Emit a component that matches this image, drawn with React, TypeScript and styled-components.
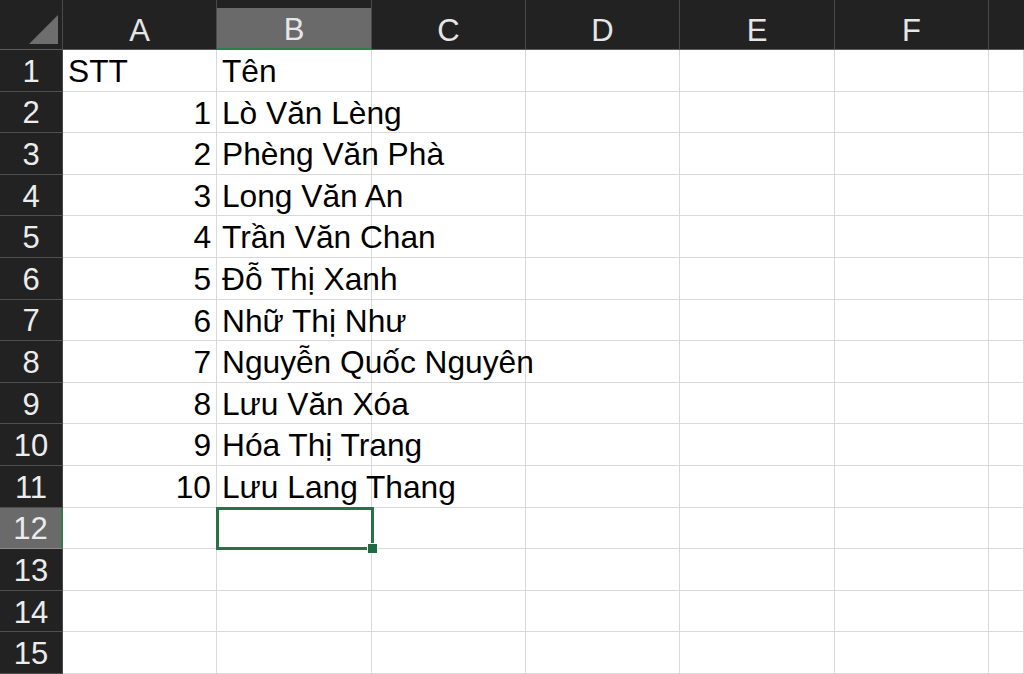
import React from "react";
import styled, { createGlobalStyle } from "styled-components";

const GlobalStyle = createGlobalStyle`
  html, body {
    margin: 0;
    padding: 0;
    background: #ffffff;
    overflow: hidden;
  }
  body {
    font-family: "Liberation Sans", Arial, sans-serif;
  }
`

const columns = ['A', 'B', 'C', 'D', 'E', 'F', '']
const names = [
  'Lò Văn Lèng',
  'Phèng Văn Phà',
  'Long Văn An',
  'Trần Văn Chan',
  'Đỗ Thị Xanh',
  'Nhữ Thị Như',
  'Nguyễn Quốc Nguyên',
  'Lưu Văn Xóa',
  'Hóa Thị Trang',
  'Lưu Lang Thang',
]

const SELECTED_COL = 'B'
const SELECTED_ROW = 12
const TOTAL_ROWS = 15

export default function App() {
  const rows = Array.from({ length: TOTAL_ROWS }, (_, i) => i + 1)

  const cellValue = (row: number, col: string) => {
    if (row === 1 && col === 'A') return 'STT'
    if (row === 1 && col === 'B') return 'Tên'
    if (row >= 2 && row <= 11) {
      if (col === 'A') return String(row - 1)
      if (col === 'B') return names[row - 2]
    }
    return ''
  }

  return (
    <>
      <GlobalStyle />
      <Sheet>
        <Corner>
          <svg width="63" height="50" viewBox="0 0 63 50">
            <polygon points="29,44 58,44 58,15" fill="#6e6e6e" />
          </svg>
        </Corner>
        {columns.map((col, i) => (
          <ColHeader key={'h' + i} $active={col === SELECTED_COL} $last={i === columns.length - 1}>
            {col}
          </ColHeader>
        ))}

        {rows.map((row) => (
          <React.Fragment key={row}>
            <RowHeader $active={row === SELECTED_ROW}>{row}</RowHeader>
            {columns.map((col, i) => {
              const value = cellValue(row, col)
              const isNumber = row > 1 && col === 'A' && value !== ''
              const selected = row === SELECTED_ROW && col === SELECTED_COL
              const overflow = col === 'B' && value !== ''
              return (
                <Cell key={col + i + row} $right={isNumber} $overflow={overflow} $selected={selected}>
                  {value}
                  {selected ? <FillHandle /> : null}
                </Cell>
              )
            })}
          </React.Fragment>
        ))}
      </Sheet>
    </>
  )
}

const Sheet = styled.div`
  display: grid;
  grid-template-columns: 63px 154px 155px 154px 154px 155px 154px 35px;
  grid-template-rows: 50px repeat(15, 41.6px);
  width: 1024px;
  height: 674px;
  background: #ffffff;
  overflow: hidden;
`

const Corner = styled.div`
  background: #222222;
  border-bottom: 1px solid #5c5c5c;
  border-right: 1px solid #4a4a4a;
  box-sizing: border-box;
  svg {
    display: block;
  }
`

const ColHeader = styled.div<{ $active?: boolean; $last?: boolean }>`
  display: flex;
  align-items: center;
  justify-content: center;
  box-sizing: border-box;
  padding-top: 11px;
  background: ${(p) => (p.$active ? 'linear-gradient(#222222 0 8px, #6a6a6a 8px)' : '#222222')};
  border-right: ${(p) => (p.$last ? 'none' : '1px solid #4a4a4a')};
  border-bottom: ${(p) => (p.$active ? '2px solid #2f7d4f' : '1px solid #5c5c5c')};
  color: #e6e6e6;
  font-size: 31px;
  line-height: 1;
`

const RowHeader = styled.div<{ $active?: boolean }>`
  display: flex;
  align-items: center;
  justify-content: center;
  box-sizing: border-box;
  padding-top: 2px;
  background: ${(p) => (p.$active ? '#6a6a6a' : '#222222')};
  border-bottom: 1px solid ${(p) => (p.$active ? '#8a8a8a' : '#4f4f4f')};
  border-right: ${(p) => (p.$active ? '2px solid #2f7d4f' : '1px solid #4a4a4a')};
  color: #ececec;
  font-size: 31px;
  line-height: 1;
`

const Cell = styled.div<{ $right?: boolean; $overflow?: boolean; $selected?: boolean }>`
  position: relative;
  display: flex;
  align-items: center;
  justify-content: ${(p) => (p.$right ? 'flex-end' : 'flex-start')};
  box-sizing: border-box;
  padding: 3px 5px 0 5px;
  border-right: 1px solid #d9d9d9;
  border-bottom: 1px solid #d9d9d9;
  color: #000000;
  font-size: 31.7px;
  line-height: 1;
  white-space: nowrap;
  overflow: visible;
  z-index: ${(p) => (p.$selected ? 3 : p.$overflow ? 2 : 1)};
  background: ${(p) => (p.$overflow ? 'transparent' : '#ffffff')};
  ${(p) => (p.$selected ? 'margin: -1px -2px -1px -1px; border: 3px solid #2a7049;' : '')}
`

const FillHandle = styled.span`
  position: absolute;
  right: -7px;
  bottom: -7px;
  width: 9px;
  height: 9px;
  background: #1f6b44;
  border: 1px solid #ffffff;
`
